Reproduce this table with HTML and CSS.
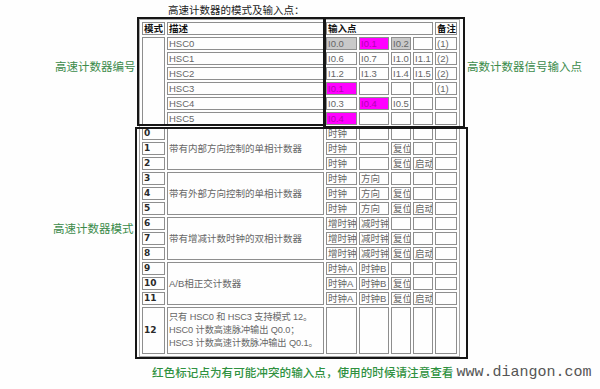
FILE: index.html
```html
<!DOCTYPE html>
<html lang="zh">
<head>
<meta charset="utf-8">
<title>高速计数器的模式及输入点</title>
<link rel="stylesheet" href="styles.css">
</head>
<body>
<div class="page">
  <div class="side side-left">
    <div class="note note-id">高速计数器编号</div>
    <div class="note note-mode">高速计数器模式</div>
  </div>
  <div class="center">
    <div class="title">高速计数器的模式及输入点：</div>
    <table class="hsc">
      <colgroup>
        <col class="c-mode"><col class="c-desc"><col class="c-in1"><col class="c-in2"><col class="c-in3"><col class="c-in4"><col class="c-note">
      </colgroup>
      <tr class="head"><th>模式</th><th>描述</th><th colspan="4">输入点</th><th>备注</th></tr>
      <tr><td class="m" rowspan="6"></td><td class="d">HSC0</td><td class="i gray">I0.0</td><td class="i hot">I0.1</td><td class="i gray">I0.2</td><td class="i"></td><td class="i">(1)</td></tr>
      <tr><td class="d">HSC1</td><td class="i">I0.6</td><td class="i">I0.7</td><td class="i">I1.0</td><td class="i">I1.1</td><td class="i">(2)</td></tr>
      <tr><td class="d">HSC2</td><td class="i">I1.2</td><td class="i">I1.3</td><td class="i">I1.4</td><td class="i">I1.5</td><td class="i">(2)</td></tr>
      <tr><td class="d">HSC3</td><td class="i hot">I0.1</td><td class="i"></td><td class="i"></td><td class="i"></td><td class="i">(1)</td></tr>
      <tr><td class="d">HSC4</td><td class="i">I0.3</td><td class="i hot">I0.4</td><td class="i">I0.5</td><td class="i"></td><td class="i"></td></tr>
      <tr><td class="d">HSC5</td><td class="i hot">I0.4</td><td class="i"></td><td class="i"></td><td class="i"></td><td class="i"></td></tr>

      <tr><td class="m">0</td><td class="d" rowspan="3">带有内部方向控制的单相计数器</td><td class="i">时钟</td><td class="i"></td><td class="i"></td><td class="i"></td><td class="i"></td></tr>
      <tr><td class="m">1</td><td class="i">时钟</td><td class="i"></td><td class="i">复位</td><td class="i"></td><td class="i"></td></tr>
      <tr><td class="m">2</td><td class="i">时钟</td><td class="i"></td><td class="i">复位</td><td class="i">启动</td><td class="i"></td></tr>

      <tr><td class="m">3</td><td class="d" rowspan="3">带有外部方向控制的单相计数器</td><td class="i">时钟</td><td class="i">方向</td><td class="i"></td><td class="i"></td><td class="i"></td></tr>
      <tr><td class="m">4</td><td class="i">时钟</td><td class="i">方向</td><td class="i">复位</td><td class="i"></td><td class="i"></td></tr>
      <tr><td class="m">5</td><td class="i">时钟</td><td class="i">方向</td><td class="i">复位</td><td class="i">启动</td><td class="i"></td></tr>

      <tr><td class="m">6</td><td class="d" rowspan="3">带有增减计数时钟的双相计数器</td><td class="i">增时钟</td><td class="i">减时钟</td><td class="i"></td><td class="i"></td><td class="i"></td></tr>
      <tr><td class="m">7</td><td class="i">增时钟</td><td class="i">减时钟</td><td class="i">复位</td><td class="i"></td><td class="i"></td></tr>
      <tr><td class="m">8</td><td class="i">增时钟</td><td class="i">减时钟</td><td class="i">复位</td><td class="i">启动</td><td class="i"></td></tr>

      <tr><td class="m">9</td><td class="d" rowspan="3">A/B相正交计数器</td><td class="i">时钟A</td><td class="i">时钟B</td><td class="i"></td><td class="i"></td><td class="i"></td></tr>
      <tr><td class="m">10</td><td class="i">时钟A</td><td class="i">时钟B</td><td class="i">复位</td><td class="i"></td><td class="i"></td></tr>
      <tr><td class="m">11</td><td class="i">时钟A</td><td class="i">时钟B</td><td class="i">复位</td><td class="i">启动</td><td class="i"></td></tr>

      <tr class="tall"><td class="m">12</td><td class="d multi">只有 HSC0 和 HSC3 支持模式 12。<br>HSC0 计数高速脉冲输出 Q0.0；<br>HSC3 计数高速计数脉冲输出 Q0.1。</td><td class="i"></td><td class="i"></td><td class="i"></td><td class="i"></td><td class="i"></td></tr>
    </table>
  </div>
  <div class="side side-right">
    <div class="note note-input">高数计数器信号输入点</div>
  </div>
  <div class="box box-a"></div>
  <div class="box box-b"></div>
  <div class="box box-c"></div>
</div>
<div class="footer">
  <span class="caption">红色标记点为有可能冲突的输入点，使用的时候请注意查看</span>
  <span class="site">www.diangon.com</span>
</div>
</body>
</html>
```

FILE: styles.css
```css
html, body {
  margin: 0;
  padding: 0;
}
body {
  width: 600px;
  height: 389px;
  overflow: hidden;
  background: #fefefe;
  font-family: "Liberation Sans", "Noto Sans CJK SC", sans-serif;
}
.page {
  position: relative;
  display: flex;
  height: 359px;
}
.side-left {
  width: 139px;
  flex: none;
}
.side-right {
  flex: 1;
  padding-left: 6px;
}
.note {
  font-family: "Noto Sans CJK SC", sans-serif;
  font-size: 11.5px;
  line-height: 14px;
  color: #3b8b4b;
  white-space: nowrap;
}
.note-id {
  margin: 59px 0 0 55px;
}
.note-mode {
  margin: 148px 0 0 53px;
}
.note-input {
  margin-top: 59px;
}
.center {
  width: 322px;
  flex: none;
}
.title {
  height: 19px;
  line-height: 19px;
  padding-left: 29px;
  font-family: "Noto Sans CJK SC", sans-serif;
  font-size: 10.5px;
  color: #222;
  white-space: nowrap;
}
.hsc {
  table-layout: fixed;
  border-collapse: separate;
  border-spacing: 2px;
  border: 1px solid #a8a8a8;
  width: 321px;
  font-size: 9.5px;
}
.c-mode { width: 23px; }
.c-desc { width: 157px; }
.c-in1 { width: 31px; }
.c-in2 { width: 30px; }
.c-in3 { width: 20px; }
.c-in4 { width: 20px; }
.c-note { width: 22px; }
.hsc th,
.hsc td {
  box-sizing: border-box;
  height: 13px;
  padding: 0 0 0 1px;
  border: 1px solid #8e8e8e;
  line-height: 11px;
  text-align: left;
  vertical-align: middle;
  white-space: nowrap;
  overflow: hidden;
}
.hsc th {
  font-family: "Noto Sans CJK SC", sans-serif;
  font-weight: bold;
  color: #111;
}
.hsc td {
  font-family: "Liberation Sans", "Noto Sans CJK SC", sans-serif;
  color: #666;
}
.hsc td.m {
  font-family: "DejaVu Sans", sans-serif;
  font-weight: bold;
  font-size: 9px;
  color: #2a2a2a;
}
.hsc td.gray {
  background: #c9c9c9;
}
.hsc td.hot {
  background: #ff00ff;
  color: #b400b4;
}
.hsc tr.tall td {
  height: 47px;
}
.hsc td.multi {
  font-size: 9.2px;
  line-height: 13px;
  letter-spacing: -0.1px;
}
.box {
  position: absolute;
  box-sizing: border-box;
  border: 2px solid #161616;
}
.box-a {
  left: 137px;
  top: 17px;
  width: 189px;
  height: 109px;
}
.box-b {
  left: 323px;
  top: 17px;
  width: 142px;
  height: 111px;
}
.box-c {
  left: 135px;
  top: 127px;
  width: 333px;
  height: 232px;
}
.footer {
  display: flex;
  align-items: center;
  height: 26px;
  padding-left: 152px;
  white-space: nowrap;
}
.caption {
  font-family: "Noto Sans CJK SC", sans-serif;
  font-size: 11.6px;
  font-weight: 500;
  color: #2f9140;
}
.site {
  margin-left: 3px;
  font-family: "Liberation Mono", monospace;
  font-size: 15px;
  color: #555;
}
```
